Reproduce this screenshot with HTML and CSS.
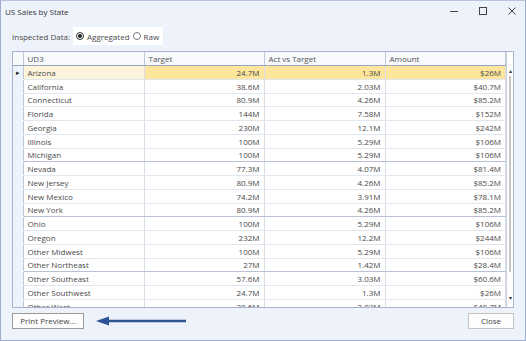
FILE: index.html
```html
<!DOCTYPE html>
<html lang="en">
<head>
    <meta charset="UTF-8">
    <title>US Sales by State</title>
    <link rel="stylesheet" href="styles.css">
</head>
<body>

<div class="fenster">
    <div class="titelleiste">
        <span class="titel">US Sales by State</span>
        <div class="steuerung">
            <svg width="10" height="10" viewBox="0 0 10 10"><path d="M1 5.5h8" stroke="#444" stroke-width="1"/></svg>
            <svg width="10" height="10" viewBox="0 0 10 10"><rect x="1.5" y="1.5" width="7" height="7" fill="none" stroke="#444" stroke-width="1"/></svg>
            <svg width="10" height="10" viewBox="0 0 10 10"><path d="M1.5 1.5l7 7M8.5 1.5l-7 7" stroke="#444" stroke-width="1"/></svg>
        </div>
    </div>

    <div class="optionen">
        <span class="beschriftung">Inspected Data:</span>
        <div class="radiogruppe">
            <span class="radio aktiv"></span><span>Aggregated</span>
            <span class="radio"></span><span>Raw</span>
        </div>
    </div>

    <div class="raster">
        <table class="tabelle">
            <colgroup>
                <col style="width:10px"><col style="width:121px"><col style="width:120px"><col style="width:121px"><col>
            </colgroup>
            <thead>
                <tr><th></th><th>UD3</th><th>Target</th><th>Act vs Target</th><th>Amount</th></tr>
            </thead>
            <tbody id="zeilen"></tbody>
        </table>
        <div class="scrollleiste">
            <span class="pfeil">&#9652;</span>
            <span class="daumen"></span>
            <span class="pfeil">&#9662;</span>
        </div>
    </div>

    <div class="fusszeile">
        <div class="links">
            <button class="knopf">Print Preview...</button>
            <svg class="pfeilgrafik" width="92" height="10" viewBox="0 0 92 10">
                <path d="M10 5H90" stroke="#2c5394" stroke-width="2.4"/>
                <path d="M0 5L13 0.5V9.5Z" fill="#2c5394"/>
            </svg>
        </div>
        <button class="knopf schliessen">Close</button>
    </div>
</div>

<script>
// Daten der Tabelle
const daten = [
    ["Arizona", "24.7M", "1.3M", "$26M"],
    ["California", "38.6M", "2.03M", "$40.7M"],
    ["Connecticut", "80.9M", "4.26M", "$85.2M"],
    ["Florida", "144M", "7.58M", "$152M"],
    ["Georgia", "230M", "12.1M", "$242M"],
    ["Illinois", "100M", "5.29M", "$106M"],
    ["Michigan", "100M", "5.29M", "$106M", true],
    ["Nevada", "77.3M", "4.07M", "$81.4M"],
    ["New Jersey", "80.9M", "4.26M", "$85.2M"],
    ["New Mexico", "74.2M", "3.91M", "$78.1M"],
    ["New York", "80.9M", "4.26M", "$85.2M", true],
    ["Ohio", "100M", "5.29M", "$106M"],
    ["Oregon", "232M", "12.2M", "$244M"],
    ["Other Midwest", "100M", "5.29M", "$106M"],
    ["Other Northeast", "27M", "1.42M", "$28.4M", true],
    ["Other Southeast", "57.6M", "3.03M", "$60.6M"],
    ["Other Southwest", "24.7M", "1.3M", "$26M"],
    ["Other West", "38.6M", "2.03M", "$40.7M"]
];

const tbody = document.getElementById("zeilen");
daten.forEach((d, i) => {
    const tr = document.createElement("tr");
    if (i === 0) tr.className = "gewaehlt";
    if (d[4]) tr.classList.add("trenner");
    tr.innerHTML = '<td class="kopf">' + (i === 0 ? '&#9656;' : '') + '</td>' +
        '<td>' + d[0] + '</td><td class="zahl">' + d[1] + '</td>' +
        '<td class="zahl">' + d[2] + '</td><td class="zahl">' + d[3] + '</td>';
    tbody.appendChild(tr);
});
</script>

</body>
</html>
```

FILE: styles.css
```css
body {
    margin: 0;
    font-family: "Open Sans", "Noto Sans", sans-serif;
    font-size: 8px;
    color: #4a4a4a;
}
.fenster {
    width: 526px;
    height: 341px;
    box-sizing: border-box;
    border: 1px solid #9eadd0;
    border-top-color: #b8c4de;
    background: #eef2fa;
    display: flex;
    flex-direction: column;
}
.titelleiste {
    height: 20px;
    display: flex;
    align-items: center;
    justify-content: space-between;
    padding-left: 4px;
    padding-right: 8px;
}
.titel {
    color: #333;
}
.steuerung {
    display: flex;
    gap: 19px;
}
.optionen {
    display: flex;
    align-items: center;
    height: 18px;
    margin-top: 6px;
    padding-left: 11px;
}
.beschriftung {
    width: 61px;
}
.radiogruppe {
    display: flex;
    align-items: center;
    background: #fff;
    height: 18px;
    padding: 0 4px 0 3px;
    gap: 3px;
}
.radio {
    width: 8px;
    height: 8px;
    border: 1px solid #7a7a7a;
    border-radius: 50%;
    box-sizing: border-box;
    display: inline-block;
    background: #fff;
    position: relative;
}
.radio.aktiv {
    border-color: #333;
}
.radio.aktiv::after {
    content: "";
    position: absolute;
    left: 1px;
    top: 1px;
    width: 4px;
    height: 4px;
    border-radius: 50%;
    background: #222;
}
.raster {
    margin: 6px 11px 0 11px;
    height: 257px;
    box-sizing: border-box;
    border: 1px solid #a7b3cc;
    background: #fff;
    display: flex;
    overflow: hidden;
}
.tabelle {
    width: 493px;
    table-layout: fixed;
    border-collapse: collapse;
}
.tabelle th {
    height: 13px;
    line-height: 11px;
    padding: 0 4px;
    text-align: left;
    font-weight: normal;
    color: #555;
    background: #f7f9fd;
    border-right: 1px solid #bfc8da;
    border-bottom: 1px solid #98a6c4;
}
.tabelle td {
    height: 12.75px;
    padding: 0 4px;
    white-space: nowrap;
    border-right: 1px solid #d8dde8;
    border-bottom: 1px solid #e2e6ee;
    line-height: 11px;
}
.tabelle td.kopf {
    background: #eef2fa;
    border-right: 1px solid #bfc8da;
    border-bottom-color: #eef2fa;
    padding: 0;
    text-align: center;
    font-size: 7px;
    color: #222;
}
.tabelle td.zahl {
    text-align: right;
}
.trenner td {
    border-bottom-color: #b9c2d4;
}
.gewaehlt td {
    background: #fee59c;
}
.gewaehlt td:nth-child(2) {
    background: #fdf5db;
}
.scrollleiste {
    flex: 1;
    display: flex;
    flex-direction: column;
    align-items: center;
    background: #fff;
    border-left: 1px solid #c9d0de;
    padding-top: 14px;
    font-size: 6px;
    color: #333;
}
.pfeil {
    line-height: 10px;
}
.daumen {
    width: 2px;
    height: 196px;
    background: #c7c7c7;
    margin-bottom: 21px;
}
.fusszeile {
    display: flex;
    justify-content: space-between;
    align-items: center;
    margin-top: 5px;
    padding: 0 11px;
}
.links {
    display: flex;
    align-items: center;
    gap: 12px;
}
.knopf {
    font-family: inherit;
    font-size: 8px;
    line-height: 14px;
    color: #444;
    height: 16px;
    width: 72px;
    padding: 0;
    background: #fdfdfd;
    border: 1px solid #9a9a9a;
}
.schliessen {
    width: 46px;
    border-color: #c3c3c3;
}
```
